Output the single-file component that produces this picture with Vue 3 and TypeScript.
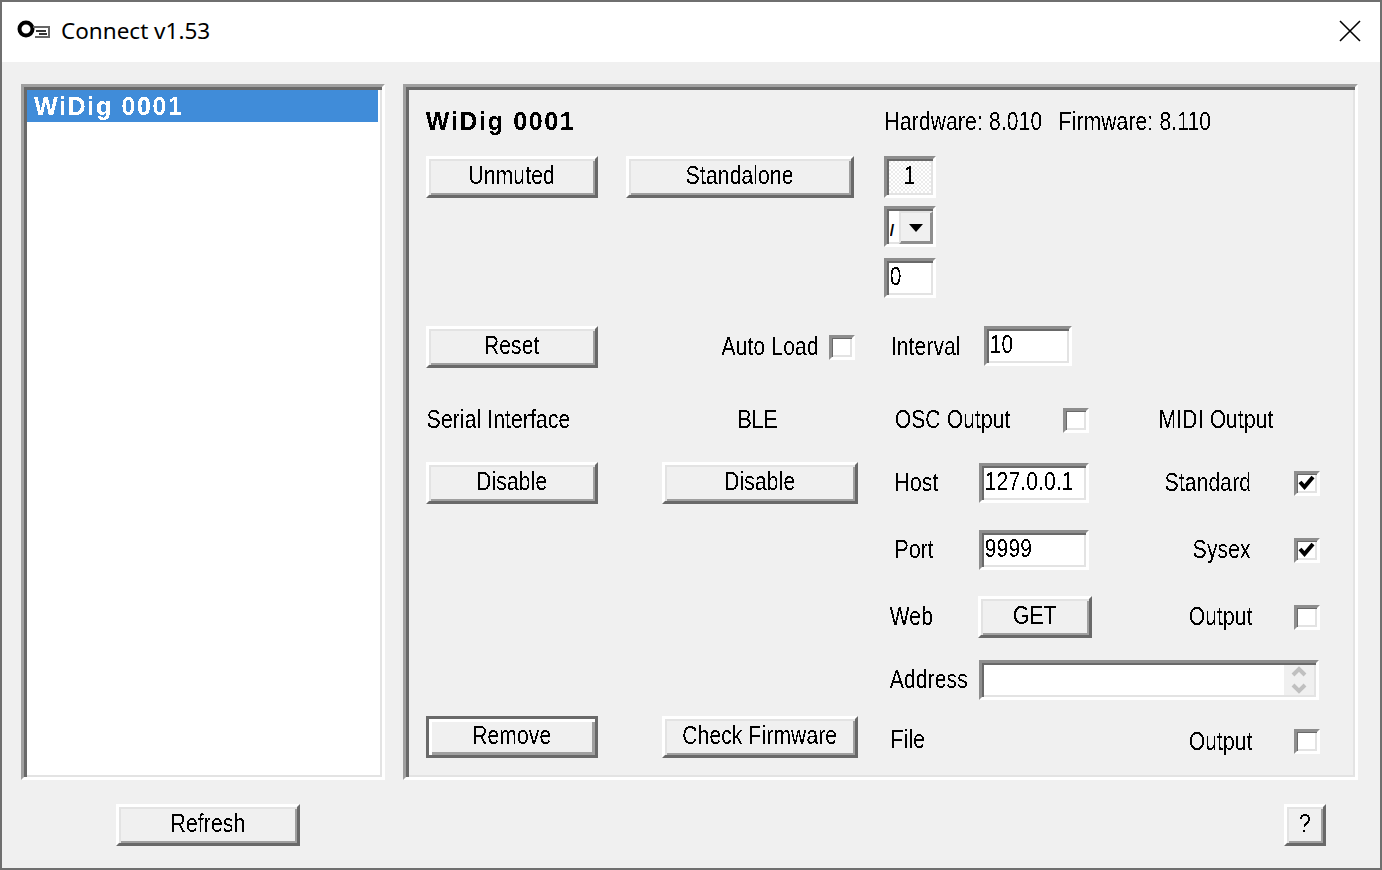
<script setup lang="ts">
const deviceName: string = 'WiDig 0001'
</script>

<template>
  <div class="window">
    <svg class="defs" width="0" height="0">
      <filter id="crisp" x="0" y="0" width="100%" height="100%" color-interpolation-filters="sRGB">
        <feComponentTransfer>
          <feFuncA type="discrete" tableValues="0 0 1 1" />
        </feComponentTransfer>
      </filter>
    </svg>
    <header class="titlebar">
      <svg class="key" width="34" height="22" viewBox="0 0 34 22">
        <circle cx="9" cy="10" r="6.5" fill="none" stroke="#000" stroke-width="4" />
        <path d="M16 8h16v10h-14" fill="none" stroke="#666" stroke-width="2" />
        <path d="M19 12h10M22 15h8" stroke="#333" stroke-width="2" />
      </svg>
      <span class="title">Connect v1.53</span>
      <svg class="close" width="22" height="22" viewBox="0 0 22 22">
        <path d="M1 1l20 20M21 1L1 21" stroke="#000" stroke-width="1.6" />
      </svg>
    </header>

    <main class="body">
      <section class="list sunken">
        <div class="list-item"><span class="bold crisp">{{ deviceName }}</span></div>
      </section>

      <section class="panel sunken">
        <div class="row r-title">
          <div class="heading"><span class="bold crisp">{{ deviceName }}</span></div>
          <span class="tx versions">Hardware: 8.010</span>
          <span class="tx firmware">Firmware: 8.110</span>
        </div>

        <div class="row r-a">
          <button class="btn w172"><span class="tx">Unmuted</span></button>
          <button class="btn w228 ml28"><span class="tx">Standalone</span></button>
          <div class="field dither w52 ml30"><span class="tx">1</span></div>
        </div>

        <div class="row r-b">
          <div class="combo sunken-s">
            <span class="combo-text">/</span>
            <span class="combo-btn"><i class="tri"></i></span>
          </div>
        </div>

        <div class="row r-c">
          <div class="field input w52"><span class="tx">0</span></div>
        </div>

        <div class="row r-d">
          <button class="btn w172"><span class="tx">Reset</span></button>
          <span class="lbl autoload"><span class="tx">Auto Load</span></span>
          <span class="check ml10"></span>
          <span class="lbl interval"><span class="tx">Interval</span></span>
          <div class="field input w88 raise"><span class="tx">10</span></div>
        </div>

        <div class="row r-e">
          <span class="lbl serial"><span class="tx">Serial Interface</span></span>
          <span class="lbl ble"><span class="tx">BLE</span></span>
          <span class="lbl osc"><span class="tx">OSC Output</span></span>
          <span class="check"></span>
          <span class="lbl midi"><span class="tx">MIDI Output</span></span>
        </div>

        <div class="row r-f">
          <button class="btn w172"><span class="tx">Disable</span></button>
          <button class="btn w196 ml64"><span class="tx">Disable</span></button>
          <span class="lbl host"><span class="tx">Host</span></span>
          <div class="field input w110"><span class="tx">127.0.0.1</span></div>
          <span class="lbl standard"><span class="tx">Standard</span></span>
          <span class="check on">
            <svg width="18" height="16" viewBox="0 0 18 16"><path d="M2 7l4.5 5L15 2" fill="none" stroke="#000" stroke-width="4" /></svg>
          </span>
        </div>

        <div class="row r-g">
          <span class="lbl port"><span class="tx">Port</span></span>
          <div class="field input w110"><span class="tx">9999</span></div>
          <span class="lbl sysex"><span class="tx">Sysex</span></span>
          <span class="check on">
            <svg width="18" height="16" viewBox="0 0 18 16"><path d="M2 7l4.5 5L15 2" fill="none" stroke="#000" stroke-width="4" /></svg>
          </span>
        </div>

        <div class="row r-h">
          <span class="lbl web"><span class="tx">Web</span></span>
          <button class="btn w114"><span class="tx">GET</span></button>
          <span class="lbl output-a"><span class="tx">Output</span></span>
          <span class="check"></span>
        </div>

        <div class="row r-i">
          <span class="lbl address"><span class="tx">Address</span></span>
          <div class="addr sunken-s">
            <span class="spin">
              <svg width="16" height="30" viewBox="0 0 16 30">
                <path d="M2 10l6-6 6 6" fill="none" stroke="#c0c0c0" stroke-width="4" />
                <path d="M2 20l6 6 6-6" fill="none" stroke="#c0c0c0" stroke-width="4" />
              </svg>
            </span>
          </div>
        </div>

        <div class="row r-j">
          <button class="btn default w172"><span class="tx">Remove</span></button>
          <button class="btn w196 ml64"><span class="tx">Check Firmware</span></button>
          <span class="lbl file"><span class="tx">File</span></span>
          <span class="lbl output-b"><span class="tx">Output</span></span>
          <span class="check low"></span>
        </div>
      </section>
    </main>

    <footer class="footer">
      <button class="btn refresh"><span class="tx">Refresh</span></button>
      <button class="btn help"><span class="tx">?</span></button>
    </footer>
  </div>
</template>

<style>
html, body { margin: 0; background: #f0f0f0; }
</style>

<style scoped>
.defs { position: absolute; }
.window {
  box-sizing: border-box;
  width: 1382px;
  height: 870px;
  border: 2px solid #6f6f6f;
  background: #f0f0f0;
  display: flex;
  flex-direction: column;
  font-family: "Liberation Sans", Arial, sans-serif;
  font-size: 21px;
  letter-spacing: 0.15px;
  color: #000;
  overflow: hidden;
}
.titlebar {
  height: 60px;
  background: #fff;
  display: flex;
  align-items: center;
  flex: none;
}
.key { margin-left: 15px; margin-top: -4px; }
.title {
  font-family: "Noto Sans", sans-serif;
  font-size: 22.5px;
  margin-left: 10px;
  margin-top: -4px;
  letter-spacing: 0;
}
.close { margin-left: auto; margin-right: 19px; margin-top: -3px; }

.body {
  display: flex;
  padding: 22px 22px 0 19px;
  flex: none;
  height: 696px;
  box-sizing: border-box;
}
.sunken {
  box-sizing: border-box;
  border: 3px solid;
  border-color: #a0a0a0 #fff #fff #a0a0a0;
  box-shadow: inset 3px 3px 0 #696969, inset -2px -2px 0 #e3e3e3;
}
.sunken-s {
  box-sizing: border-box;
  border: 3px solid;
  border-color: #8e8e8e #fff #fff #8e8e8e;
  box-shadow: inset 2px 2px 0 #696969, inset -2px -2px 0 #e3e3e3;
}
.list {
  width: 364px;
  height: 696px;
  background: #fff;
  padding: 3px;
}
.list-item {
  background: #408cd9;
  color: #fff;
  height: 32px;
  line-height: 32px;
  padding-left: 7px;
  margin-right: 1px;
}
.bold {
  font-weight: 700;
  font-size: 25px;
  letter-spacing: 1.65px;
  display: inline-block;
}
.crisp { filter: url(#crisp); }
.panel {
  width: 956px;
  height: 696px;
  margin-left: 18px;
  padding: 17px 0 0 20px;
}
.row { display: flex; align-items: center; }
.r-title { height: 34px; }
.r-a { height: 42px; margin-top: 18px; }
.r-b { height: 41px; margin-top: 8px; padding-left: 458px; }
.r-c { height: 40px; margin-top: 11px; padding-left: 458px; }
.r-d { height: 42px; margin-top: 28px; }
.r-e { height: 32px; margin-top: 36px; }
.r-f { height: 42px; margin-top: 26px; }
.r-g { height: 40px; margin-top: 26px; padding-left: 469px; }
.r-h { height: 42px; margin-top: 26px; padding-left: 464px; }
.r-i { height: 40px; margin-top: 22px; padding-left: 464px; }
.r-j { height: 42px; margin-top: 16px; }

.tx {
  display: inline-block;
  transform: translateY(-1px) scaleY(1.24);
  white-space: nowrap;
  filter: url(#crisp);
}
.heading { width: 459px; flex: none; }
.versions { width: 174px; flex: none; margin-top: 2px; }
.firmware { flex: none; margin-top: 2px; }

.btn {
  box-sizing: border-box;
  height: 42px;
  padding: 0 0 3px;
  font: inherit;
  letter-spacing: inherit;
  color: #000;
  background: #f0f0f0;
  border: 3px solid;
  border-color: #fff #696969 #696969 #fff;
  box-shadow: inset 2px 2px 0 #e3e3e3, inset -2px -2px 0 #a0a0a0;
  flex: none;
}
.btn.default {
  border: 3px solid #696969;
  box-shadow: inset 3px 3px 0 #fff, inset -3px -3px 0 #a0a0a0;
}
.w172 { width: 172px; }
.w228 { width: 228px; }
.w196 { width: 196px; }
.w114 { width: 114px; }
.w52 { width: 52px; }
.w88 { width: 88px; }
.w110 { width: 110px; }
.ml28 { margin-left: 28px; }
.ml30 { margin-left: 30px; }
.ml64 { margin-left: 64px; }
.ml10 { margin-left: 10px; }

.field {
  box-sizing: border-box;
  height: 40px;
  border: 3px solid;
  border-color: #8e8e8e #fff #fff #8e8e8e;
  box-shadow: inset 2px 2px 0 #696969, inset -2px -2px 0 #e3e3e3;
  display: flex;
  align-items: center;
  flex: none;
  padding: 0 0 2px 3px;
}
.raise { align-self: flex-start; }
.input { background: #fff; }
.dither {
  height: 42px;
  justify-content: center;
  padding: 0 0 2px;
  background: repeating-conic-gradient(#fff 0 25%, #ececec 0 50%) 0 0 / 4px 4px;
}
.combo {
  width: 52px;
  height: 41px;
  background: #fff;
  display: flex;
  align-items: flex-start;
}
.combo-text {
  width: 9px;
  margin-left: 3px;
  margin-top: 13px;
  font-size: 16px;
  font-weight: 700;
  overflow: hidden;
}
.combo-btn {
  box-sizing: border-box;
  width: 34px;
  height: 33px;
  margin-top: 2px;
  background: #f0f0f0;
  border: 2px solid;
  border-color: #e3e3e3 #8e8e8e #8e8e8e #e3e3e3;
  box-shadow: inset -1px -1px 0 #8e8e8e;
  display: flex;
  align-items: center;
  justify-content: center;
}
.tri {
  width: 0;
  height: 0;
  border-style: solid;
  border-width: 8px 7px 0;
  border-color: #000 transparent transparent;
}

.lbl { flex: none; box-sizing: border-box; }
.autoload { width: 221px; text-align: right; }
.interval { width: 129px; padding-left: 36px; }
.serial { width: 236px; padding-left: 1px; }
.ble { width: 196px; text-align: center; padding-right: 4px; }
.osc { width: 205px; padding-left: 37px; }
.midi { padding-left: 70px; }
.host { width: 121px; padding-left: 37px; }
.standard { width: 205px; padding-left: 76px; }
.port { width: 84px; }
.sysex { width: 205px; padding-left: 104px; }
.web { width: 88px; }
.output-a { width: 202px; padding-left: 97px; }
.address { width: 89px; }
.file { width: 299px; padding-left: 33px; margin-top: 6px; }
.output-b { width: 137px; padding-left: 32px; margin-top: 10px; }

.check {
  box-sizing: border-box;
  width: 26px;
  height: 25px;
  flex: none;
  background: #fff;
  border: 3px solid;
  border-color: #8e8e8e #fff #fff #8e8e8e;
  box-shadow: inset 1px 1px 0 #696969, inset -2px -2px 0 #e3e3e3;
  display: flex;
  align-items: center;
  justify-content: center;
}
.check.low { margin-top: 8px; }
.addr {
  width: 340px;
  height: 40px;
  background: #fff;
  display: flex;
  justify-content: flex-end;
}
.spin {
  width: 30px;
  background: #f0f0f0;
  margin: 2px 2px 2px 0;
  display: flex;
  align-items: center;
  justify-content: center;
}

.footer {
  flex: none;
  display: flex;
  padding: 46px 0 0 114px;
}
.refresh { width: 184px; }
.help { width: 42px; margin-left: 984px; }
</style>
